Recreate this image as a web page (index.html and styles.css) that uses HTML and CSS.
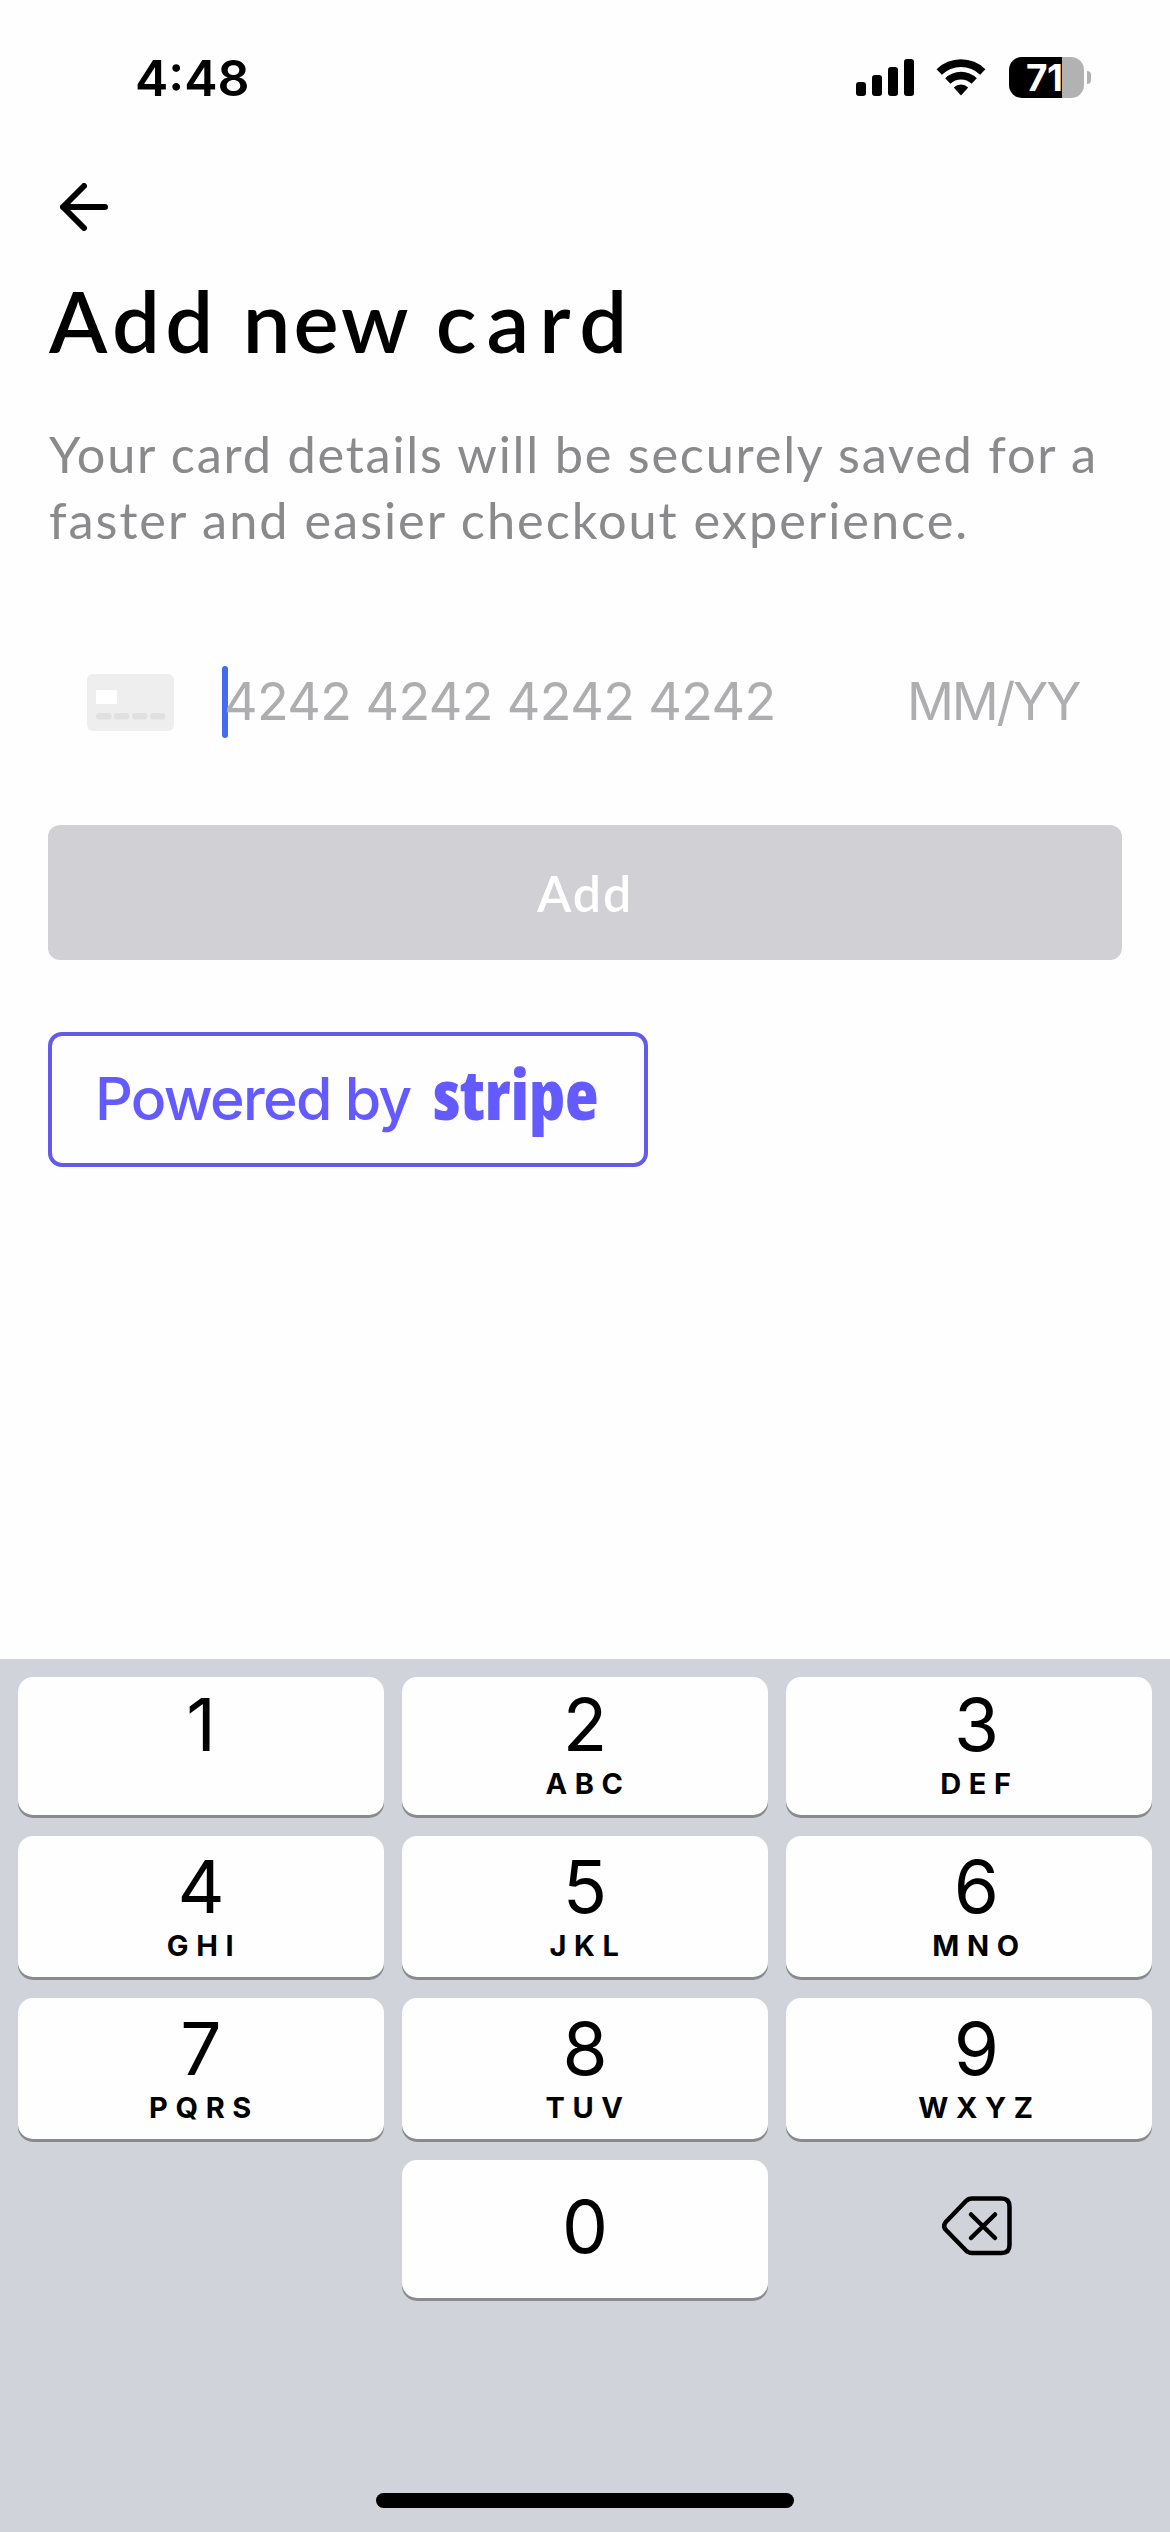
FILE: index.html
```html
<!DOCTYPE html>
<html lang="en">
<head>
<meta charset="utf-8">
<title>Add new card</title>
<link rel="stylesheet" href="styles.css">
</head>
<body>
<div class="screen">
  <header class="status-bar">
    <span class="time">4:48</span>
    <div class="status-icons">
      <svg class="signal" viewBox="0 0 58 37" width="58" height="37">
        <rect x="0" y="23" width="10" height="14" rx="3"/>
        <rect x="16" y="16" width="10" height="21" rx="3"/>
        <rect x="32" y="8" width="10" height="29" rx="3"/>
        <rect x="48" y="0" width="10" height="37" rx="3"/>
      </svg>
      <svg class="wifi" viewBox="0 0 50 37" width="50" height="37">
        <path d="M0.6 10.2A35 35 0 0 1 49.4 10.2L44.2 15.8A27.4 27.4 0 0 0 5.8 15.8Z"/>
        <path d="M9.2 19.2A22.8 22.8 0 0 1 40.8 19.2L35.6 24.8A15.2 15.2 0 0 0 14.4 24.8Z"/>
        <path d="M17.8 28.4A10.6 10.6 0 0 1 32.2 28.4L25 36.4Z"/>
      </svg>
      <div class="battery">
        <div class="battery-body">71</div>
        <span class="battery-tip"></span>
      </div>
    </div>
  </header>

  <main class="content">
    <a class="back" aria-label="Back">
      <svg viewBox="0 0 48 48" width="48" height="48"><path d="M45 24H3M24 3L3 24L24 45"/></svg>
    </a>
    <h1 class="title">
      <span class="title-add">Add</span>
      <span class="title-new">new</span>
      <span class="title-card">card</span>
    </h1>
    <p class="intro">
      <span class="line">Your card details will be securely saved for a</span>
      <span class="line line-end">faster and easier checkout experience.</span>
    </p>

    <div class="card-field">
      <svg class="card-icon" viewBox="0 0 87 57" width="87" height="57">
        <rect width="87" height="57" rx="6" fill="#eeeeee"/>
        <rect x="9" y="16" width="21" height="14" rx="1" fill="#ffffff"/>
        <g fill="#e0e0e0">
          <rect x="9" y="39" width="15.5" height="6.5" rx="3"/>
          <rect x="27" y="39" width="15.5" height="6.5" rx="3"/>
          <rect x="45" y="39" width="15.5" height="6.5" rx="3"/>
          <rect x="63" y="39" width="15.5" height="6.5" rx="3"/>
        </g>
      </svg>
      <span class="caret"></span>
      <span class="card-number">4242 4242 4242 4242</span>
      <span class="expiry">MM/YY</span>
    </div>

    <button class="add-button" disabled>Add</button>

    <div class="stripe-badge">
      <span class="powered">Powered by</span>
      <span class="stripe">stripe</span>
    </div>
  </main>

  <section class="keyboard">
    <div class="keys">
      <div class="key key-top"><b>1</b></div>
      <div class="key key-top"><b>2</b><i>ABC</i></div>
      <div class="key key-top key-right"><b>3</b><i>DEF</i></div>
      <div class="key"><b>4</b><i>GHI</i></div>
      <div class="key"><b>5</b><i>JKL</i></div>
      <div class="key key-right"><b>6</b><i>MNO</i></div>
      <div class="key"><b>7</b><i>PQRS</i></div>
      <div class="key"><b>8</b><i>TUV</i></div>
      <div class="key key-right"><b>9</b><i>WXYZ</i></div>
      <div></div>
      <div class="key key-zero"><b>0</b></div>
      <div class="delete">
        <svg viewBox="0 0 70 60" width="70" height="60">
          <path d="M30 2.5H59.5Q67.5 2.5 67.5 10.500V49Q67.5 57 59.500 57H30Q26.500 57 24 54.500L4 34Q0.300 30 4 25.800L24 5Q26.500 2.500 30 2.500Z"/>
          <path d="M29 18.500L53 42M53 18.500L29 42"/>
        </svg>
      </div>
    </div>
    <div class="home-indicator"></div>
  </section>
</div>
</body>
</html>
```
FILE: styles.css
```css
* { box-sizing: border-box; }

body {
  margin: 0;
  background: #fefefe;
  color: #000;
  font-family: Inter, "Liberation Sans", sans-serif;
}

.screen {
  width: 1170px;
  height: 2532px;
  display: flex;
  flex-direction: column;
  overflow: hidden;
}

svg { display: block; }

/* Status bar */
.status-bar {
  height: 183px;
  padding: 53px 79px 0 135px;
  display: flex;
  justify-content: space-between;
  align-items: flex-start;
}

.time {
  font-size: 50px;
  line-height: 50px;
  font-weight: 600;
}

.status-icons {
  display: flex;
  align-items: center;
  height: 41px;
  margin-top: 4px;
}

.wifi { margin: 0 23px 0 22px; }

.battery {
  display: flex;
  align-items: center;
  gap: 3px;
}

.battery-body {
  width: 75px;
  height: 41px;
  padding-left: 17px;
  border-radius: 13px;
  background: linear-gradient(to right, #000 53px, #b2b2b2 53px);
  color: #fff;
  font-size: 37px;
  line-height: 41px;
  font-weight: 700;
  letter-spacing: -0.5px;
}

.battery-tip {
  width: 4px;
  height: 13px;
  border-radius: 0 4px 4px 0;
  background: #b2b2b2;
}

/* Form */
.content {
  flex: 1;
  padding: 0 48px;
  display: flex;
  flex-direction: column;
  align-items: flex-start;
}

.back { margin-left: 12px; }

.back svg {
  fill: none;
  stroke: #000;
  stroke-width: 6;
  stroke-linecap: round;
  stroke-linejoin: round;
}

.title {
  margin: 47px 0 0 1px;
  display: flex;
  gap: 24px;
  font-family: Lato, sans-serif;
  font-size: 85px;
  line-height: 84px;
  font-weight: 600;
}

.title-add { letter-spacing: 5.5px; }
.title-new { letter-spacing: 3px; }
.title-card { letter-spacing: 10px; }

.intro {
  margin: 59px 0 0 1px;
  color: #8a8a8c;
  font-family: Lato, sans-serif;
  font-size: 50.5px;
  line-height: 66px;
  letter-spacing: 1.76px;
  white-space: nowrap;
}

.line { display: block; }
.line-end { letter-spacing: 1.96px; }

.card-field {
  width: 100%;
  height: 72px;
  margin-top: 113px;
  padding-left: 39px;
  display: flex;
  align-items: center;
  color: #aeaeb0;
  font-size: 52px;
  line-height: 72px;
  white-space: nowrap;
}

.caret {
  width: 6px;
  height: 72px;
  margin: 0 -4px 0 48px;
  border-radius: 3px;
  background: #456bf0;
}

.card-number {
  width: 683px;
  letter-spacing: -0.6px;
}

.expiry { letter-spacing: -2.2px; }

.add-button {
  width: 100%;
  height: 135px;
  margin-top: 87px;
  padding: 0;
  border: 0;
  border-radius: 12px;
  background: #d1d0d5;
  color: #fff;
  font-family: Lato, sans-serif;
  font-size: 50px;
  font-weight: 600;
  letter-spacing: 2px;
}

.stripe-badge {
  width: 600px;
  height: 135px;
  margin-top: 72px;
  padding-left: 43px;
  border: 4px solid #635bec;
  border-radius: 14px;
  display: flex;
  align-items: baseline;
  color: #635bff;
  line-height: 126px;
  white-space: nowrap;
}

.powered {
  width: 338px;
  font-size: 59px;
  font-weight: 500;
  letter-spacing: -1.7px;
}

.stripe {
  font-family: "Open Sans", sans-serif;
  font-size: 69px;
  line-height: 100px;
  font-weight: 800;
  font-stretch: 76%;
}

/* Keyboard */
.keyboard {
  height: 873px;
  padding: 18px 18px 24px;
  background: #d0d3da;
  display: flex;
  flex-direction: column;
  justify-content: space-between;
  align-items: center;
}

.keys {
  display: grid;
  grid-template-columns: repeat(3, 366px);
  grid-template-rows: 138px 141px 141px 138px;
  gap: 21px 18px;
}

.key {
  padding-top: 14px;
  border-radius: 15px;
  background: #fefefe;
  box-shadow: 0 3px 0 #898a8d;
  display: flex;
  flex-direction: column;
  align-items: center;
}

.key-top { padding-top: 11px; }
.key-right { padding-left: 15px; }
.key-zero { padding-top: 30px; }

.key b {
  font-size: 73px;
  line-height: 73px;
  font-weight: 400;
}

.key i {
  margin: 8px 0 0 6px;
  font-size: 29px;
  line-height: 30px;
  font-style: normal;
  font-weight: 650;
  letter-spacing: 7.6px;
}

.delete {
  padding: 36px 0 0 156px;
}

.delete svg {
  fill: none;
  stroke: #000;
  stroke-width: 4.5;
  stroke-linecap: round;
  stroke-linejoin: round;
}

.home-indicator {
  width: 418px;
  height: 15px;
  border-radius: 8px;
  background: #000;
}
```
